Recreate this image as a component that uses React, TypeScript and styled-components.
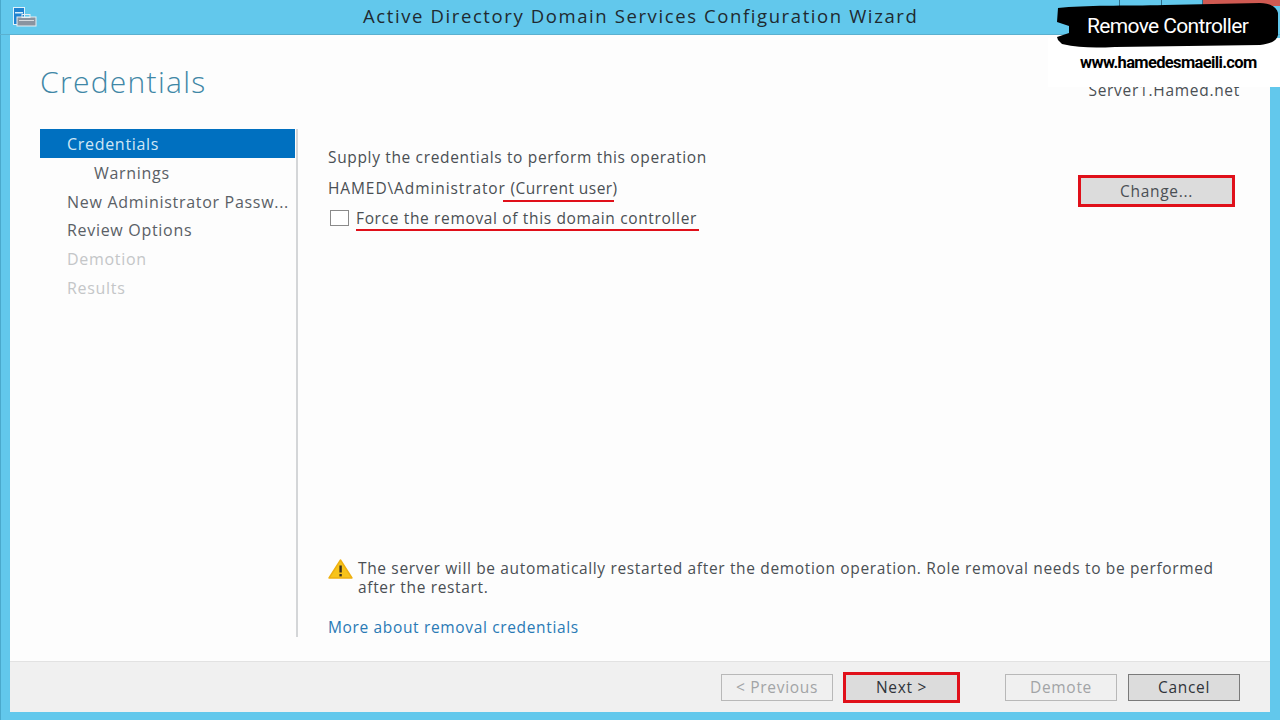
import React from "react";
import styled, { createGlobalStyle } from "styled-components";

const GlobalStyle = createGlobalStyle`
  html, body {
    margin: 0;
    padding: 0;
    width: 1280px;
    height: 720px;
    overflow: hidden;
    background: #62c8ec;
    font-family: "Open Sans", "Noto Sans", sans-serif;
  }
`;

const Window = styled.div`
  position: relative;
  width: 1280px;
  height: 720px;
  display: flex;
  flex-direction: column;
  padding: 0 10px 8px;
  box-sizing: border-box;
  background: #62c8ec;
  box-shadow: inset 1px 0 0 #4aa9cc;
  overflow: hidden;
`;

const TitleBar = styled.div`
  height: 35px;
  flex: none;
  margin: 0 -10px;
  padding: 0 0 0 12px;
  display: flex;
  align-items: center;
  position: relative;
  border-bottom: 1px solid #5bb0cf;
  box-sizing: border-box;
`;

const AppIcon = styled.svg`
  width: 25px;
  height: 20px;
  flex: none;
  margin-top: -1px;
`;

const TitleText = styled.div`
  position: absolute;
  left: 363px;
  top: 4px;
  font-size: 18.5px;
  letter-spacing: 1.6px;
  line-height: 24px;
  color: #1f2a30;
  white-space: nowrap;
`;

const Body = styled.div`
  flex: 1;
  min-height: 0;
  display: flex;
  flex-direction: column;
  background: #fdfdfd;
`;

const PageTitle = styled.h1`
  margin: 0;
  padding: 26px 0 0 30px;
  height: 94px;
  box-sizing: border-box;
  font-size: 30px;
  letter-spacing: 1.3px;
  line-height: 42px;
  font-weight: 300;
  color: #3f87a6;
  flex: none;
`;

const Main = styled.div`
  flex: 1;
  min-height: 0;
  display: flex;
  padding: 0 0 25px 30px;
`;

const Nav = styled.nav`
  width: 255px;
  flex: none;
  display: flex;
  flex-direction: column;
`;

const NavItem = styled.div<{ $active?: boolean; $disabled?: boolean; $sub?: boolean }>`
  height: 28.8px;
  line-height: 30px;
  padding-left: ${(p) => (p.$sub ? 54 : 27)}px;
  font-size: 16px;
  letter-spacing: 0.7px;
  white-space: nowrap;
  overflow: hidden;
  background: ${(p) => (p.$active ? "#0070c0" : "transparent")};
  color: ${(p) => (p.$active ? "#cfe6f5" : p.$disabled ? "#c4c6c8" : "#5a6066")};
`;

const Divider = styled.div`
  width: 2px;
  flex: none;
  background: #d4d6d8;
  margin: 0 0 -1px 1px;
`;

const Content = styled.div`
  flex: 1;
  min-width: 0;
  display: flex;
  flex-direction: column;
  padding: 17px 35px 0 30px;
`;

const Line = styled.div`
  font-size: 15.5px;
  letter-spacing: 0.65px;
  line-height: 22px;
  color: #4a4f54;
  white-space: nowrap;
`;

const AccountName = styled.span`
  letter-spacing: 0.9px;
`;

const UserRow = styled.div`
  display: flex;
  justify-content: space-between;
  align-items: flex-start;
  height: 22px;
  margin-top: 9px;
`;

const Marked = styled.span<{ $tight?: boolean }>`
  position: relative;
  ${(p) => (p.$tight ? "letter-spacing: 0.45px;" : "")}
`;

const Underline = styled.span<{ $left: number; $right: number; $bottom: number }>`
  position: absolute;
  left: ${(p) => p.$left}px;
  right: ${(p) => p.$right}px;
  bottom: ${(p) => p.$bottom}px;
  height: 2.5px;
  background: #e0101a;
`;

const CheckRow = styled.label`
  display: flex;
  align-items: center;
  gap: 7px;
  margin-top: 8px;
  padding-left: 2px;
`;

const CheckBox = styled.span`
  width: 19px;
  height: 16px;
  flex: none;
  box-sizing: border-box;
  border: 1px solid #8a8a8a;
  background: #fff;
`;

const Spacer = styled.div`
  flex: 1;
`;

const Warning = styled.div`
  display: flex;
  gap: 5px;
  align-items: flex-start;
`;

const WarnIcon = styled.svg`
  width: 25px;
  height: 20px;
  flex: none;
`;

const WarnText = styled.div`
  font-size: 15.5px;
  letter-spacing: 0.65px;
  line-height: 19px;
  color: #4a4f54;
  white-space: nowrap;
`;

const MoreLink = styled.a`
  display: block;
  margin: 19px 0 -2px;
  font-size: 15.5px;
  letter-spacing: 0.65px;
  line-height: 22px;
  color: #2a7ab5;
`;

const Footer = styled.div`
  height: 51px;
  flex: none;
  box-sizing: border-box;
  background: #f0f0f0;
  border-top: 1px solid #e2e2e2;
  display: flex;
  align-items: center;
  padding: 0 30px 0 0;
`;

const FooterSpacer = styled.div<{ $w?: number }>`
  ${(p) => (p.$w ? `width: ${p.$w}px;` : "flex: 1;")}
`;

const Button = styled.button<{ $disabled?: boolean; $marked?: boolean; $w: number; $h?: number }>`
  width: ${(p) => p.$w}px;
  height: ${(p) => p.$h ?? 27}px;
  flex: none;
  box-sizing: border-box;
  padding: 0;
  font-family: inherit;
  font-size: 15.5px;
  letter-spacing: 0.7px;
  background: ${(p) => (p.$disabled ? "#f0f0f0" : "#dcdcdc")};
  color: ${(p) => (p.$disabled ? "#a2a4a6" : "#30343a")};
  border: ${(p) => (p.$marked ? "3px solid #e0101a" : p.$disabled ? "1px solid #b8b8b8" : "1px solid #7a7a7a")};
`;

const ChangeButton = styled(Button)`
  margin-top: -2px;
  color: #4a4f54;
`;

const ControlStrip = styled.div`
  position: absolute;
  top: 0;
  left: 1119px;
  width: 161px;
  height: 6px;
  display: flex;
`;

const ControlCell = styled.div<{ $w: number; $close?: boolean }>`
  width: ${(p) => p.$w}px;
  background: ${(p) => (p.$close ? "#cf5a52" : "transparent")};
  border-left: 1px solid #2f6f8c;
`;

const WhitePatch = styled.div`
  position: absolute;
  left: 1048px;
  top: 38px;
  width: 232px;
  height: 49px;
  background: #fff;
`;

const ServerName = styled.div`
  position: absolute;
  right: 40px;
  top: 80px;
  font-size: 15.5px;
  letter-spacing: 0.7px;
  line-height: 20px;
  color: #4a4f54;
`;

const Brush = styled.svg`
  position: absolute;
  left: 1055px;
  top: 3px;
  width: 225px;
  height: 47px;
`;

const BrushText = styled.div`
  position: absolute;
  left: 1087px;
  top: 12px;
  font-family: "Roboto", sans-serif;
  font-size: 21px;
  letter-spacing: -0.65px;
  line-height: 28px;
  color: #fff;
  white-space: nowrap;
`;

const SiteText = styled.div`
  position: absolute;
  left: 1080px;
  top: 52px;
  font-family: "Roboto", sans-serif;
  font-weight: 700;
  font-size: 16.5px;
  letter-spacing: -0.65px;
  line-height: 22px;
  color: #000;
  white-space: nowrap;
`;

export default function App() {
  return (
    <Window>
      <GlobalStyle />
      <TitleBar>
        <AppIcon viewBox="0 0 25 20">
          <rect x="1.5" y="0.5" width="11" height="17" fill="#1f82d0" stroke="#dff2fa" />
          <rect x="3" y="5" width="8" height="1.5" fill="#d8eefa" />
          <rect x="5" y="10" width="19" height="9" fill="#8a94a0" stroke="#e6eef2" />
          <rect x="10" y="7.5" width="8" height="3" fill="none" stroke="#e6eef2" />
          <rect x="7" y="13" width="15" height="1" fill="#d5dade" />
        </AppIcon>
        <TitleText>Active Directory Domain Services Configuration Wizard</TitleText>
      </TitleBar>
      <Body>
        <PageTitle>Credentials</PageTitle>
        <Main>
          <Nav>
            <NavItem $active>Credentials</NavItem>
            <NavItem $sub>Warnings</NavItem>
            <NavItem>New Administrator Passw...</NavItem>
            <NavItem>Review Options</NavItem>
            <NavItem $disabled>Demotion</NavItem>
            <NavItem $disabled>Results</NavItem>
          </Nav>
          <Divider />
          <Content>
            <Line>Supply the credentials to perform this operation</Line>
            <UserRow>
              <Line>
                <AccountName>HAMED\Administrator</AccountName>{" "}
                <Marked $tight>
                  (Current user)
                  <Underline $left={-8} $right={4} $bottom={-3} />
                </Marked>
              </Line>
              <ChangeButton $marked $w={157} $h={32}>Change...</ChangeButton>
            </UserRow>
            <CheckRow>
              <CheckBox />
              <Line>
                <Marked>
                  Force the removal of this domain controller
                  <Underline $left={0} $right={-2} $bottom={-2} />
                </Marked>
              </Line>
            </CheckRow>
            <Spacer />
            <Warning>
              <WarnIcon viewBox="0 0 25 20">
                <path d="M12.5 1 L24 19 L1 19 Z" fill="#f7c31a" stroke="#eeb010" strokeWidth="1.4" strokeLinejoin="round" />
                <rect x="11.4" y="6.5" width="2.4" height="7" fill="#3a3020" />
                <rect x="11.4" y="15" width="2.4" height="2.4" fill="#3a3020" />
              </WarnIcon>
              <WarnText>
                The server will be automatically restarted after the demotion operation. Role removal needs to be performed
                <br />
                after the restart.
              </WarnText>
            </Warning>
            <MoreLink>More about removal credentials</MoreLink>
          </Content>
        </Main>
        <Footer>
          <Spacer />
          <Button $disabled $w={112}>&lt; Previous</Button>
          <FooterSpacer $w={10} />
          <Button $marked $w={117} $h={31}>Next &gt;</Button>
          <FooterSpacer $w={45} />
          <Button $disabled $w={112}>Demote</Button>
          <FooterSpacer $w={11} />
          <Button $w={112}>Cancel</Button>
        </Footer>
      </Body>
      <ServerName>Server1.Hamed.net</ServerName>
      <WhitePatch />
      <ControlStrip>
        <ControlCell $w={42} />
        <ControlCell $w={41} />
        <ControlCell $w={78} $close />
      </ControlStrip>
      <Brush viewBox="0 0 225 47" preserveAspectRatio="none">
        <path d="M3 5 C30 2 70 3 110 2 L205 0 C215 0 222 4 223 10 L223 32 C222 38 215 41 205 42 L60 44 C40 45 25 45 7 41 L3 37 L2 34 L14 30 L14 23 L2 19 Z" fill="#000" />
      </Brush>
      <BrushText>Remove Controller</BrushText>
      <SiteText>www.hamedesmaeili.com</SiteText>
    </Window>
  );
}
